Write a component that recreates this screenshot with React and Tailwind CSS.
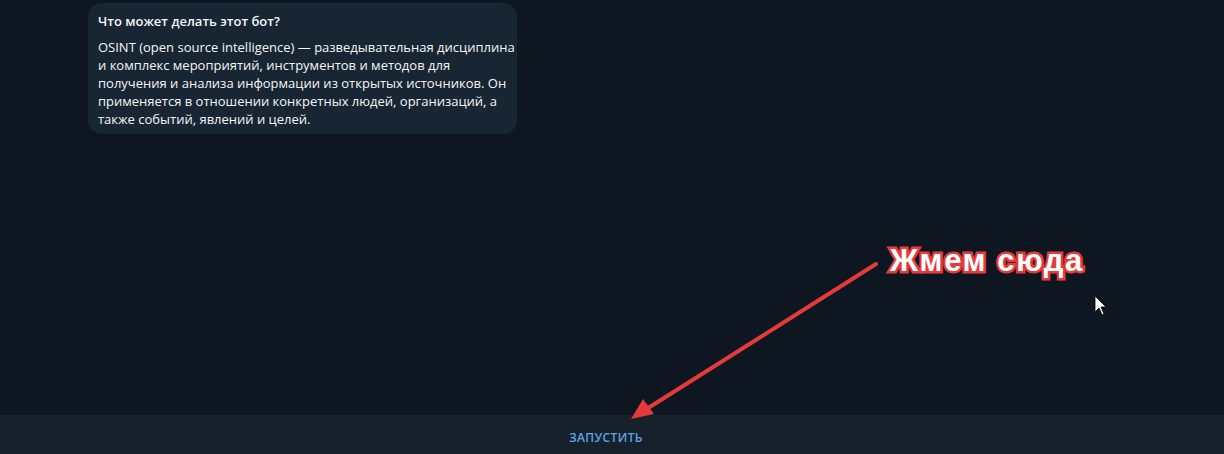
const lines = [
  'OSINT (open source intelligence) — разведывательная дисциплина',
  'и комплекс мероприятий, инструментов и методов для',
  'получения и анализа информации из открытых источников. Он',
  'применяется в отношении конкретных людей, организаций, а',
  'также событий, явлений и целей.',
];

export default function App() {
  return (
    <div className="h-[454px] w-full flex flex-col bg-[#0e1621] overflow-hidden" style={{ fontFamily: '"Open Sans", "Noto Sans", sans-serif' }}>
      <main className="relative flex-1">
        <div className="ml-[88px] mt-[3px] w-[429px] rounded-[14px] bg-[#182533] pl-[10px] pr-[8px] pt-[9px] pb-[6px] text-[13px] leading-[18px] text-[#f5f5f5]">
          <h3 className="font-semibold mb-[8px]">Что может делать этот бот?</h3>
          <p className="whitespace-nowrap">
            {lines.map((l, i) => (
              <span key={i} className="block">{l}</span>
            ))}
          </p>
        </div>

        {/* annotation */}
        <svg className="absolute left-0 top-0 pointer-events-none" width="1224" height="454">
          <line x1="876" y1="264" x2="645" y2="410" stroke="#e53a3a" strokeWidth="4" strokeLinecap="round" />
          <polygon points="631,419 643,399 654,414" fill="#e53a3a" />
          <path d="M1095 296 L1095 312 L1099 308 L1102 315 L1104 314 L1101 307 L1106 307 Z" fill="#fff" stroke="#000" strokeWidth="0.8" />
        </svg>
        <div
          className="absolute left-[890px] top-[245px] text-[31px] leading-[31px] font-bold text-white tracking-[1.6px] whitespace-nowrap"
          style={{ fontFamily: '"Liberation Sans", Arial, sans-serif', WebkitTextStroke: '5px #e53a3a', paintOrder: 'stroke fill' }}
        >
          Жмем сюда
        </div>
      </main>
      <div className="h-[39px] bg-[#17212b] flex items-center justify-center pt-[6px] pr-[12px]">
        <button className="text-[12px] font-semibold text-[#5ea5e6] uppercase tracking-[0.4px]">Запустить</button>
      </div>
    </div>
  );
}
